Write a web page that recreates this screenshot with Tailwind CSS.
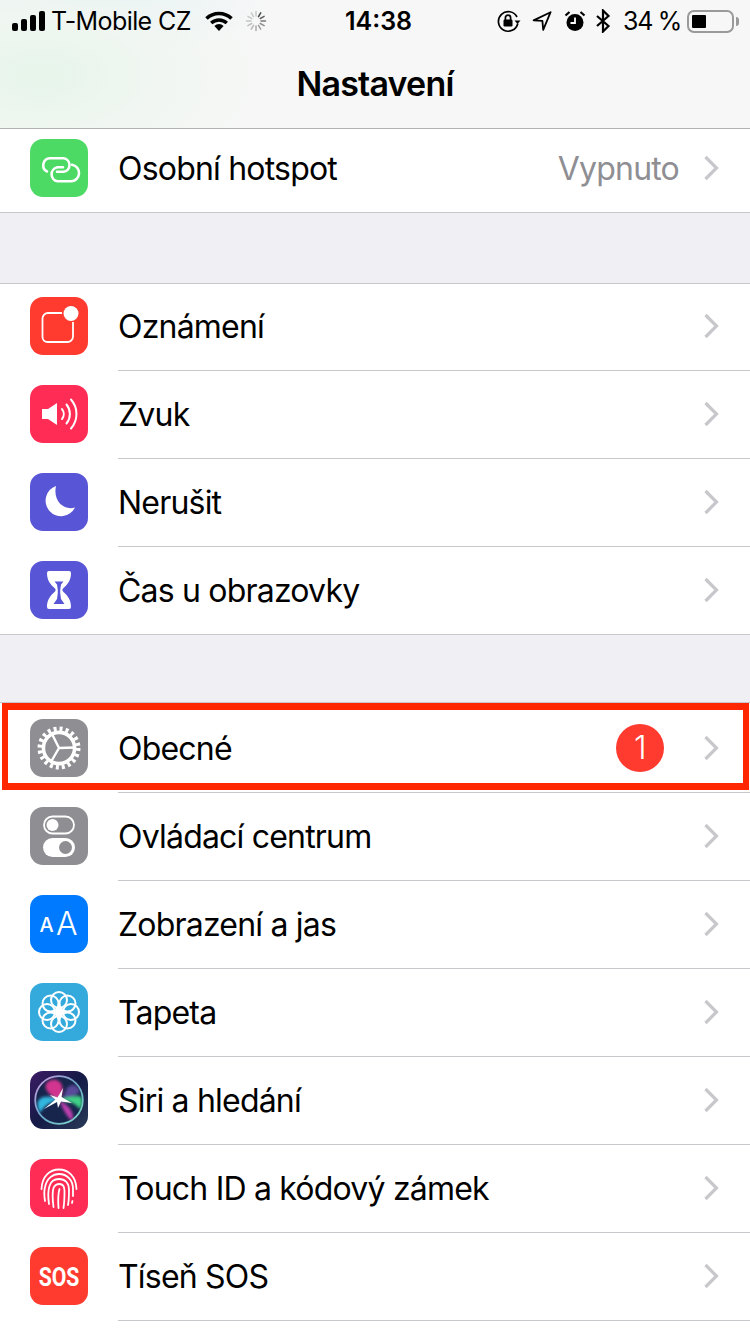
<!doctype html>
<html lang="cs">
<head>
<meta charset="utf-8">
<script src="https://cdn.jsdelivr.net/npm/@tailwindcss/browser@4"></script>
</head>
<body class="m-0 bg-white">
<div class="relative w-[750px] h-[1334px] overflow-hidden bg-white text-black font-['Inter','Liberation_Sans',sans-serif]">

  <!-- header -->
  <header class="h-[129px] border-b border-[#b2b2b2] bg-[#f7f7f7] bg-[radial-gradient(ellipse_240px_130px_at_40px_75px,#e6f5ea_0%,#f0f6f1_45%,transparent_100%),radial-gradient(ellipse_200px_60px_at_70px_0px,#e1f0f6_0%,transparent_100%)]">
    <div class="relative flex h-[42px] items-center text-[25px] leading-none">
      <svg class="ml-[12px] shrink-0" width="33" height="20" viewBox="0 0 33 20" fill="#000"><rect x="0" y="12" width="6" height="8" rx="2"/><rect x="9" y="8" width="6" height="12" rx="2"/><rect x="18" y="4" width="6" height="16" rx="2"/><rect x="27" y="0" width="6" height="20" rx="2"/></svg>
      <span class="ml-[6px] w-[154px] shrink-0 tracking-[-0.6px]">T-Mobile CZ</span>
      <svg class="shrink-0" width="28" height="20" viewBox="0 0 28 20" fill="none" stroke="#000"><path d="M1.500 7.500a18 18 0 0 1 25 0" stroke-width="3.600"/><path d="M6.200 12a11.500 11.500 0 0 1 15.600 0" stroke-width="3.400"/><path d="M14 20l-4.600-5a6.500 6.500 0 0 1 9.200 0z" fill="#000" stroke="none"/></svg>
      <svg class="ml-[12px] shrink-0" width="22" height="22" viewBox="0 0 22 22" stroke="#000" stroke-width="1.500" stroke-linecap="round"><line x1="11" y1="1.500" x2="11" y2="6" opacity=".18"/><line x1="15.700" y1="2.900" x2="13.500" y2="6.700" opacity=".7"/><line x1="19.100" y1="6.300" x2="15.300" y2="8.500" opacity=".6"/><line x1="20.500" y1="11" x2="16" y2="11" opacity=".5"/><line x1="19.100" y1="15.700" x2="15.300" y2="13.500" opacity=".42"/><line x1="15.700" y1="19.100" x2="13.500" y2="15.300" opacity=".35"/><line x1="11" y1="20.500" x2="11" y2="16" opacity=".3"/><line x1="6.300" y1="19.100" x2="8.500" y2="15.300" opacity=".25"/><line x1="2.900" y1="15.700" x2="6.700" y2="13.500" opacity=".22"/><line x1="1.500" y1="11" x2="6" y2="11" opacity=".2"/><line x1="2.900" y1="6.300" x2="6.700" y2="8.500" opacity=".18"/><line x1="6.300" y1="2.900" x2="8.500" y2="6.700" opacity=".18"/></svg>
      <span class="ml-[78px] font-semibold">14:38</span>
      <svg class="ml-auto shrink-0" width="26" height="24" viewBox="0 0 26 24" fill="none" stroke="#000" stroke-width="1.700"><path d="M21 8a9.800 9.800 0 1 0 .8 6.500"/><path d="M18.500 11.500h6l-3 3.600z" fill="#000" stroke="none"/><rect x="7.500" y="10.500" width="9" height="7" rx="1.200" fill="#000" stroke="none"/><path d="M9.400 11V8.800a2.600 2.600 0 0 1 5.200 0V11"/></svg>
      <svg class="ml-[10px] shrink-0" width="20" height="20" viewBox="0 0 20 20" fill="none" stroke="#000" stroke-width="1.800" stroke-linejoin="round"><path d="M18.600 1.200L1.600 9.400l8.800 .4.800 9z"/></svg>
      <svg class="ml-[12px] shrink-0" width="22" height="22" viewBox="0 0 22 22"><circle cx="11" cy="12.500" r="8.500" fill="#000"/><path d="M11 7.500v5.500H6.500" fill="none" stroke="#fff" stroke-width="1.800"/><path d="M1.500 5.500L5.500 2M20.500 5.500L16.500 2" stroke="#000" stroke-width="2.200"/></svg>
      <svg class="ml-[9px] shrink-0" width="16" height="24" viewBox="0 0 16 24" fill="none" stroke="#000" stroke-width="2.200"><path d="M2 7l11.500 10-5.500 5.500V1.500l5.500 5.500L2 17"/></svg>
      <span class="ml-[12px] tracking-[-1.300px]">34 %</span>
      <div class="ml-[6px] flex h-[23px] w-[47px] items-center rounded-[7px] border-2 border-[#9a9a9a] pl-[3px]">
        <div class="h-[13px] w-[14px] rounded-[1px] bg-black"></div>
      </div>
      <div class="ml-[2px] mr-[11px] h-[9px] w-[3px] rounded-r-[3px] bg-[#9a9a9a]"></div>
    </div>
    <h1 class="flex h-[83px] items-center justify-center text-[34px] font-semibold tracking-[-0.8px]">Nastavení</h1>
  </header>

  <!-- hotspot -->
  <div class="flex h-[84px] pl-[30px] shadow-[inset_0_-1px_0_#c8c7cc]">
    <div class="mb-[16px] mt-auto flex h-[58px] w-[58px] shrink-0 items-center justify-center rounded-[13px] bg-[#4cd964]">
      <svg width="58" height="58" viewBox="0 0 58 58" fill="none" stroke="#fff" stroke-width="2.600" stroke-linecap="round"><path d="M17 32.500A7 7 0 0 1 20 19.300H33.500A6.800 6.800 0 0 1 33.500 32.800H27"/><path d="M42 25.800A8.300 8.300 0 0 1 41 42.300H27.500A7.100 7.100 0 0 1 27.500 28.300H33"/></svg>
    </div>
    <div class="mb-[16px] ml-[30px] mt-auto flex h-[58px] flex-1 items-center pr-[30px] text-[32px] tracking-[-0.8px]">
      <span class="flex-1 pt-[2px]">Osobní hotspot</span>
      <span class="pt-[2px] text-[#8e8e93]">Vypnuto</span>
      <svg class="ml-[25px]" width="16" height="26" viewBox="0 0 16 26" fill="none" stroke="#c7c7cc" stroke-width="3.200"><path d="M1.500 2l11 11-11 11"/></svg>
    </div>
  </div>

  <div class="h-[70px] bg-[#efeff4]"></div>
  <div class="h-px bg-[#c8c7cc]"></div>

  <!-- group 1 -->
  <div class="flex h-[87px] pl-[30px]">
    <div class="mb-[16px] mt-auto h-[58px] w-[58px] shrink-0 rounded-[13px] bg-[#ff3b30]">
      <svg width="58" height="58" viewBox="0 0 58 58" fill="none" stroke="#fff" stroke-width="1.800"><path d="M32 16H18a5.500 5.500 0 0 0-5.500 5.500v18.500a5 5 0 0 0 5 5h20a5.500 5.500 0 0 0 5.500-5.500V25"/><circle cx="41" cy="16.500" r="7.500" fill="#fff" stroke="none"/></svg>
    </div>
    <div class="ml-[30px] flex flex-1 items-end border-b border-[#c8c7cc] pb-[15px] pr-[30px] text-[32px] tracking-[-0.8px]">
      <div class="flex h-[58px] flex-1 items-center"><span class="flex-1 pt-[2px]">Oznámení</span><svg width="16" height="26" viewBox="0 0 16 26" fill="none" stroke="#c7c7cc" stroke-width="3.200"><path d="M1.500 2l11 11-11 11"/></svg></div>
    </div>
  </div>
  <div class="flex h-[88px] pl-[30px]">
    <div class="mb-[16px] mt-auto h-[58px] w-[58px] shrink-0 rounded-[13px] bg-[#ff2d55]">
      <svg width="58" height="58" viewBox="0 0 58 58" fill="none" stroke="#fff" stroke-width="2" stroke-linecap="round"><path d="M12 24h6l9-6v22l-9-6h-6z" fill="#fff" stroke="none"/><path d="M32 24a8 8 0 0 1 0 10"/><path d="M36.500 19.500a15 15 0 0 1 0 19"/><path d="M41 14.500a22 22 0 0 1 0 29"/></svg>
    </div>
    <div class="ml-[30px] flex flex-1 items-end border-b border-[#c8c7cc] pb-[15px] pr-[30px] text-[32px] tracking-[-0.8px]">
      <div class="flex h-[58px] flex-1 items-center"><span class="flex-1 pt-[2px]">Zvuk</span><svg width="16" height="26" viewBox="0 0 16 26" fill="none" stroke="#c7c7cc" stroke-width="3.200"><path d="M1.500 2l11 11-11 11"/></svg></div>
    </div>
  </div>
  <div class="flex h-[88px] pl-[30px]">
    <div class="mb-[16px] mt-auto h-[58px] w-[58px] shrink-0 rounded-[13px] bg-[#5856d6]">
      <svg width="58" height="58" viewBox="0 0 58 58" fill="#fff"><path d="M26 13A15.500 15.500 0 1 0 45 34.500C35 38 22.500 29 26 13z"/></svg>
    </div>
    <div class="ml-[30px] flex flex-1 items-end border-b border-[#c8c7cc] pb-[15px] pr-[30px] text-[32px] tracking-[-0.8px]">
      <div class="flex h-[58px] flex-1 items-center"><span class="flex-1 pt-[2px]">Nerušit</span><svg width="16" height="26" viewBox="0 0 16 26" fill="none" stroke="#c7c7cc" stroke-width="3.200"><path d="M1.500 2l11 11-11 11"/></svg></div>
    </div>
  </div>
  <div class="flex h-[88px] pl-[30px] shadow-[inset_0_-1px_0_#c8c7cc]">
    <div class="mb-[16px] mt-auto h-[58px] w-[58px] shrink-0 rounded-[13px] bg-[#5856d6]">
      <svg width="58" height="58" viewBox="0 0 58 58"><path d="M19 10h20a2 2 0 0 1 2 2c0 7-3 11-7.500 15-1.500 1.300-1.500 2.700 0 4 4.500 4 7.500 8 7.500 15a2 2 0 0 1-2 2H19a2 2 0 0 1-2-2c0-7 3-11 7.500-15 1.500-1.300 1.500-2.700 0-4C20 23 17 19 17 12a2 2 0 0 1 2-2z" fill="#fff"/><path d="M24.500 20.500h9l-2.500 3-.8 5.500v3l.8 6 3.500 5h-11l3.500-5 .8-6v-3l-.8-5.500z" fill="#5856d6"/><path d="M24 15h10l-.5 1.500h-9z" fill="#fff"/></svg>
    </div>
    <div class="ml-[30px] flex flex-1 items-end border-b border-transparent pb-[15px] pr-[30px] text-[32px] tracking-[-0.8px]">
      <div class="flex h-[58px] flex-1 items-center"><span class="flex-1 pt-[2px]">Čas u obrazovky</span><svg width="16" height="26" viewBox="0 0 16 26" fill="none" stroke="#c7c7cc" stroke-width="3.200"><path d="M1.500 2l11 11-11 11"/></svg></div>
    </div>
  </div>

  <div class="h-[67px] bg-[#efeff4]"></div>
  <div class="h-px bg-[#c8c7cc]"></div>

  <!-- group 2 -->
  <div class="flex h-[90px] pl-[30px]">
    <div class="mb-[16px] mt-auto h-[58px] w-[58px] shrink-0 rounded-[13px] bg-[#8e8e93]">
      <svg width="58" height="58" viewBox="0 0 58 58" fill="none" stroke="#fff"><circle cx="29" cy="29" r="19.200" stroke-width="4.600" stroke-dasharray="3 3.032"/><circle cx="29" cy="29" r="15.600" stroke-width="3.600"/><path d="M29 29L45 28.500M29 29L22.500 16M29 29L21.500 42" stroke-width="2.400"/></svg>
    </div>
    <div class="ml-[30px] flex flex-1 items-end border-b border-[#c8c7cc] pb-[15px] pr-[30px] text-[32px] tracking-[-0.8px]">
      <div class="flex h-[58px] flex-1 items-center">
        <span class="flex-1 pt-[2px]">Obecné</span>
        <span class="flex h-[48px] w-[48px] items-center justify-center rounded-full bg-[#ff3b30] text-[32px] font-light text-white">1</span>
        <svg class="ml-[40px]" width="16" height="26" viewBox="0 0 16 26" fill="none" stroke="#c7c7cc" stroke-width="3.200"><path d="M1.500 2l11 11-11 11"/></svg>
      </div>
    </div>
  </div>
  <div class="flex h-[88px] pl-[30px]">
    <div class="mb-[16px] mt-auto h-[58px] w-[58px] shrink-0 rounded-[13px] bg-[#8e8e93]">
      <svg width="58" height="58" viewBox="0 0 58 58"><rect x="14" y="9.500" width="30" height="17" rx="8.500" fill="none" stroke="#fff" stroke-width="1.800"/><circle cx="22.500" cy="18" r="6" fill="#fff"/><rect x="13" y="31" width="32" height="19" rx="9.500" fill="#fff"/><circle cx="35.500" cy="40.500" r="6.500" fill="#8e8e93"/></svg>
    </div>
    <div class="ml-[30px] flex flex-1 items-end border-b border-[#c8c7cc] pb-[15px] pr-[30px] text-[32px] tracking-[-0.8px]">
      <div class="flex h-[58px] flex-1 items-center"><span class="flex-1 pt-[2px]">Ovládací centrum</span><svg width="16" height="26" viewBox="0 0 16 26" fill="none" stroke="#c7c7cc" stroke-width="3.200"><path d="M1.500 2l11 11-11 11"/></svg></div>
    </div>
  </div>
  <div class="flex h-[88px] pl-[30px]">
    <div class="mb-[16px] mt-auto h-[58px] w-[58px] shrink-0 rounded-[13px] bg-[#007aff]">
      <svg width="58" height="58" viewBox="0 0 58 58" fill="#fff" font-family="Inter, sans-serif"><text x="9.500" y="36.500" font-size="20" font-weight="500">A</text><text x="26" y="40" font-size="32" font-weight="300">A</text></svg>
    </div>
    <div class="ml-[30px] flex flex-1 items-end border-b border-[#c8c7cc] pb-[15px] pr-[30px] text-[32px] tracking-[-0.8px]">
      <div class="flex h-[58px] flex-1 items-center"><span class="flex-1 pt-[2px]">Zobrazení a jas</span><svg width="16" height="26" viewBox="0 0 16 26" fill="none" stroke="#c7c7cc" stroke-width="3.200"><path d="M1.500 2l11 11-11 11"/></svg></div>
    </div>
  </div>
  <div class="flex h-[88px] pl-[30px]">
    <div class="mb-[16px] mt-auto h-[58px] w-[58px] shrink-0 rounded-[13px] bg-[#34aadc]">
      <svg width="58" height="58" viewBox="0 0 58 58" fill="none" stroke="#fff" stroke-width="2">
        <circle cx="29" cy="17" r="8"/><circle cx="29" cy="17" r="8" transform="rotate(45 29 29)"/><circle cx="29" cy="17" r="8" transform="rotate(90 29 29)"/><circle cx="29" cy="17" r="8" transform="rotate(135 29 29)"/><circle cx="29" cy="17" r="8" transform="rotate(180 29 29)"/><circle cx="29" cy="17" r="8" transform="rotate(225 29 29)"/><circle cx="29" cy="17" r="8" transform="rotate(270 29 29)"/><circle cx="29" cy="17" r="8" transform="rotate(315 29 29)"/>
        <circle cx="29" cy="29" r="3.800" fill="#fff" stroke="none"/>
      </svg>
    </div>
    <div class="ml-[30px] flex flex-1 items-end border-b border-[#c8c7cc] pb-[15px] pr-[30px] text-[32px] tracking-[-0.8px]">
      <div class="flex h-[58px] flex-1 items-center"><span class="flex-1 pt-[2px]">Tapeta</span><svg width="16" height="26" viewBox="0 0 16 26" fill="none" stroke="#c7c7cc" stroke-width="3.200"><path d="M1.500 2l11 11-11 11"/></svg></div>
    </div>
  </div>
  <div class="flex h-[88px] pl-[30px]">
    <div class="mb-[16px] mt-auto h-[58px] w-[58px] shrink-0 overflow-hidden rounded-[13px] bg-gradient-to-br from-[#3c1a66] via-[#141a45] to-[#2a3a58]">
      <svg width="58" height="58" viewBox="0 0 58 58">
        <defs>
          <linearGradient id="sirir" x1="0" y1="0" x2="1" y2="1"><stop offset="0" stop-color="#d49ae0"/><stop offset=".5" stop-color="#6aa8c8"/><stop offset="1" stop-color="#7fe0c8"/></linearGradient>
          <filter id="sirif" x="-30%" y="-30%" width="160%" height="160%"><feGaussianBlur stdDeviation="1.600"/></filter>
          <filter id="sirig" x="-30%" y="-30%" width="160%" height="160%"><feGaussianBlur stdDeviation=".6"/></filter>
          <clipPath id="siric"><circle cx="29" cy="29" r="23.500"/></clipPath>
        </defs>
        <circle cx="29" cy="29" r="23.800" fill="#17244c" stroke="url(#sirir)" stroke-width="1.800"/>
        <g clip-path="url(#siric)">
          <g filter="url(#sirif)">
            <path d="M37 17C42 12 47 13 50 20 46 26 37 27 33 27z" fill="#5a4a9a"/>
            <path d="M29 29C18 24 11 15 19 10 30 5 37 16 29 29z" fill="#d2358f"/>
            <path d="M29 29C21 30 14 35 10 42 5 33 8 27 14 26 20 25 26 27 29 29z" fill="#33b8e0"/>
            <path d="M29 29C37 29 45 32 50 38 53 33 53 28 50 25 43 25 35 26 29 29z" fill="#3fcf86"/>
            <path d="M29 29C32 36 36 45 42 50 45 44 41 35 29 29z" fill="#c03fb0"/>
          </g>
          <path d="M33 17L31.500 26 42 32 31 30.500 28 37 27 31 14 38 25.500 28.500 20 24 27.500 26.500z" fill="#fff" filter="url(#sirig)"/>
        </g>
      </svg>
    </div>
    <div class="ml-[30px] flex flex-1 items-end border-b border-[#c8c7cc] pb-[15px] pr-[30px] text-[32px] tracking-[-0.8px]">
      <div class="flex h-[58px] flex-1 items-center"><span class="flex-1 pt-[2px]">Siri a hledání</span><svg width="16" height="26" viewBox="0 0 16 26" fill="none" stroke="#c7c7cc" stroke-width="3.200"><path d="M1.500 2l11 11-11 11"/></svg></div>
    </div>
  </div>
  <div class="flex h-[88px] pl-[30px]">
    <div class="mb-[16px] mt-auto h-[58px] w-[58px] shrink-0 rounded-[13px] bg-[#ff2d55]">
      <svg width="58" height="58" viewBox="0 0 58 58" fill="none" stroke="#fff" stroke-width="1.800" stroke-linecap="round"><path d="M11.500 30C12 17 20 10.500 29 10.500 38 10.500 46 17 46.500 30"/><path d="M15 42C14 36 14 32 15 28 17 19 23 15 29 15 37 15 43 21 43 30V37"/><path d="M19 45C18 38 18.500 30 19.500 27 21 22 25 20 29 20 35 20 39 24 39 31 39 36 39 41 38 46"/><path d="M23.500 48C22.500 40 22.500 32 23.500 29 25 25.500 28 25 29.500 25 33 25 34.500 28 34.500 32 34.500 38 34.500 43 33.500 49"/><path d="M28.500 49C28 42 28 35 29.500 30"/><path d="M42.500 42L42 44"/></svg>
    </div>
    <div class="ml-[30px] flex flex-1 items-end border-b border-[#c8c7cc] pb-[15px] pr-[30px] text-[32px] tracking-[-0.8px]">
      <div class="flex h-[58px] flex-1 items-center"><span class="flex-1 pt-[2px]">Touch ID a kódový zámek</span><svg width="16" height="26" viewBox="0 0 16 26" fill="none" stroke="#c7c7cc" stroke-width="3.200"><path d="M1.500 2l11 11-11 11"/></svg></div>
    </div>
  </div>
  <div class="flex h-[88px] pl-[30px]">
    <div class="mb-[16px] mt-auto h-[58px] w-[58px] shrink-0 rounded-[13px] bg-[#ff3b30]">
      <svg width="58" height="58" viewBox="0 0 58 58" fill="#fff" font-family="Roboto, sans-serif"><text transform="translate(29 38.500) scale(.8 1)" text-anchor="middle" font-size="26.500" font-weight="700">SOS</text></svg>
    </div>
    <div class="ml-[30px] flex flex-1 items-end border-b border-[#c8c7cc] pb-[15px] pr-[30px] text-[32px] tracking-[-0.8px]">
      <div class="flex h-[58px] flex-1 items-center"><span class="flex-1 pt-[2px]">Tíseň SOS</span><svg width="16" height="26" viewBox="0 0 16 26" fill="none" stroke="#c7c7cc" stroke-width="3.200"><path d="M1.500 2l11 11-11 11"/></svg></div>
    </div>
  </div>

  <!-- red annotation box -->
  <div class="absolute left-[2px] top-[703px] h-[87px] w-[747px] border-x-[6px] border-y-[7px] border-[#ff2600]"></div>
</div>
</body>
</html>
